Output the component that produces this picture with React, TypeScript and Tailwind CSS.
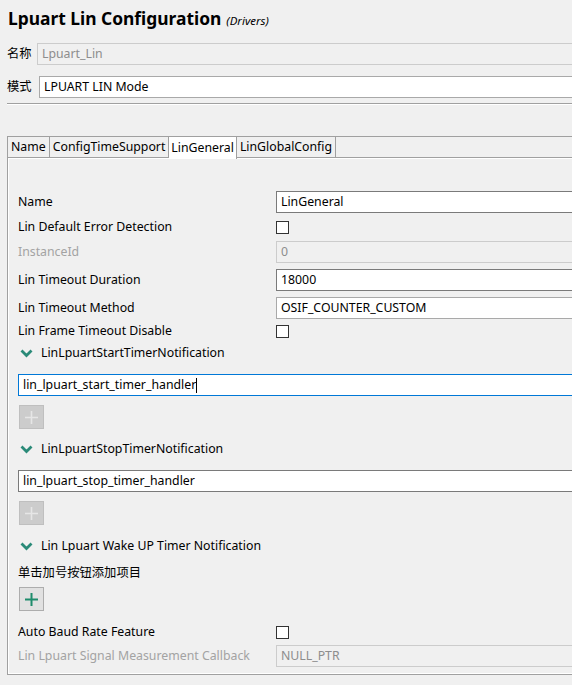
import React from "react";

const font = { fontFamily: '"Noto Sans", "Noto Sans CJK SC", sans-serif' };

const Chevron = () => (
  <svg width="13" height="9" viewBox="0 0 13 9" className="mr-[8px]">
    <path d="M1.5 1.5 L6.5 6.5 L11.5 1.5" stroke="#2a8a78" strokeWidth="2.8" fill="none" />
  </svg>
);

const PlusButton = ({ enabled }: { enabled?: boolean }) => (
  <div
    className={
      enabled
        ? "w-[25px] h-[24px] ml-[1px] border border-[#adadad] bg-[#e1e1e1] flex items-center justify-center"
        : "w-[25px] h-[24px] ml-[1px] border border-[#bfbfbf] bg-[#cccccc] flex items-center justify-center"
    }
  >
    <svg width="15" height="15" viewBox="0 0 15 15">
      <path
        d="M7.5 1 V14 M1 7.5 H14"
        stroke={enabled ? "#1e8c6c" : "#e6e6e6"}
        strokeWidth={enabled ? 2 : 1.6}
      />
    </svg>
  </div>
);

const Checkbox = () => <div className="w-[13px] h-[13px] border border-[#333] bg-white" />;

const TextBox = ({ value, disabled, focused, light }: { value: string; disabled?: boolean; focused?: boolean; light?: boolean }) => {
  let cls = "h-[22px] flex-1 flex items-center pl-[4px] text-[12.3px] border ";
  if (disabled) cls += "bg-[#f0f0f0] border-[#cccccc] text-[#8d8d8d]";
  else if (focused) cls += "bg-white border-[#0078d7] text-black";
  else if (light) cls += "bg-white border-[#a9a9a9] text-black";
  else cls += "bg-white border-[#7a7a7a] text-black";
  return (
    <div className={cls}>
      {value}
      {focused && <span className="inline-block w-[1px] h-[15px] bg-black" />}
    </div>
  );
};

const Row = ({ label, grey, children, h = "h-[22px]", mt }: { label: string; grey?: boolean; children: React.ReactNode; h?: string; mt: string }) => (
  <div className={`flex items-center ${h} ${mt}`}>
    <div className={`w-[258px] text-[12.3px] ${grey ? "text-[#a3a3a3]" : "text-black"}`}>{label}</div>
    {children}
  </div>
);

const Header = ({ text, mt }: { text: string; mt: string }) => (
  <div className={`flex items-center h-[20px] pl-[2px] text-[12.3px] text-black ${mt}`}>
    <Chevron />
    {text}
  </div>
);

export default function App() {
  const tabs = ["Name", "ConfigTimeSupport", "LinGeneral", "LinGlobalConfig"];
  return (
    <div className="w-[572px] h-[685px] overflow-hidden bg-[#f0f0f0]" style={font}>
      <div className="w-[620px]">
        <div className="flex items-baseline pl-[8px] pt-[5px] h-[38px]">
          <span className="text-[17.4px] font-bold text-black">Lpuart Lin Configuration</span>
          <span className="text-[11.5px] italic text-black ml-[5px]">(Drivers)</span>
        </div>
        <div className="flex items-center h-[22px] mt-[5px] pl-[7px]">
          <span className="text-[12.3px] w-[30px] text-black">名称</span>
          <TextBox value="Lpuart_Lin" disabled />
        </div>
        <div className="flex items-center h-[22px] mt-[11px] pl-[7px]">
          <span className="text-[12.3px] w-[32px] text-black">模式</span>
          <TextBox value="LPUART LIN Mode" light />
        </div>
        <div className="ml-[7px] mt-[5px] border-t border-[#a0a0a0] border-b border-b-white h-[2px]" />

        <div className="ml-[7px] mt-[31px] flex h-[22px] border-t border-[#a0a0a0]">
          {tabs.map((t) => (
            <div
              key={t}
              className={
                t === "LinGeneral"
                  ? "h-[22px] px-[2px] flex items-center text-[12.3px] bg-white border-r border-[#a0a0a0] -mb-[1px] relative"
                  : "h-[21px] px-[3px] flex items-center text-[12.3px] bg-[#f0f0f0] border-r border-b border-[#a0a0a0] first:border-l"
              }
            >
              {t}
            </div>
          ))}
          <div className="flex-1 border-b border-[#a0a0a0] h-[21px]" />
        </div>

        <div className="ml-[7px] border-l border-b border-[#a0a0a0] bg-[#f0f0f0]">
          <div className="border-l border-t border-b border-white pl-[9px] pt-[32px] pb-[6px]">
            <Row label="Name" mt="mt-0">
              <TextBox value="LinGeneral" />
            </Row>
            <Row label="Lin Default Error Detection" h="h-[20px]" mt="mt-[4px]">
              <Checkbox />
            </Row>
            <Row label="InstanceId" grey mt="mt-[4px]">
              <TextBox value="0" disabled />
            </Row>
            <Row label="Lin Timeout Duration" mt="mt-[6px]">
              <TextBox value="18000" />
            </Row>
            <Row label="Lin Timeout Method" mt="mt-[6px]">
              <TextBox value="OSIF_COUNTER_CUSTOM" light />
            </Row>
            <Row label="Lin Frame Timeout Disable" h="h-[20px]" mt="mt-[2px]">
              <Checkbox />
            </Row>
            <Header text="LinLpuartStartTimerNotification" mt="mt-[2px]" />
            <div className="flex mt-[11px]">
              <TextBox value="lin_lpuart_start_timer_handler" focused />
            </div>
            <div className="mt-[9px]">
              <PlusButton />
            </div>
            <Header text="LinLpuartStopTimerNotification" mt="mt-[10px]" />
            <div className="flex mt-[11px]">
              <TextBox value="lin_lpuart_stop_timer_handler" />
            </div>
            <div className="mt-[9px]">
              <PlusButton />
            </div>
            <Header text="Lin Lpuart Wake UP Timer Notification" mt="mt-[11px]" />
            <div className="h-[20px] mt-[7px] flex items-center text-[12.3px] text-black">单击加号按钮添加项目</div>
            <div className="mt-[4px]">
              <PlusButton enabled />
            </div>
            <Row label="Auto Baud Rate Feature" h="h-[20px]" mt="mt-[11px]">
              <Checkbox />
            </Row>
            <Row label="Lin Lpuart Signal Measurement Callback" grey mt="mt-[3px]">
              <TextBox value="NULL_PTR" disabled />
            </Row>
          </div>
        </div>
      </div>
    </div>
  );
}
